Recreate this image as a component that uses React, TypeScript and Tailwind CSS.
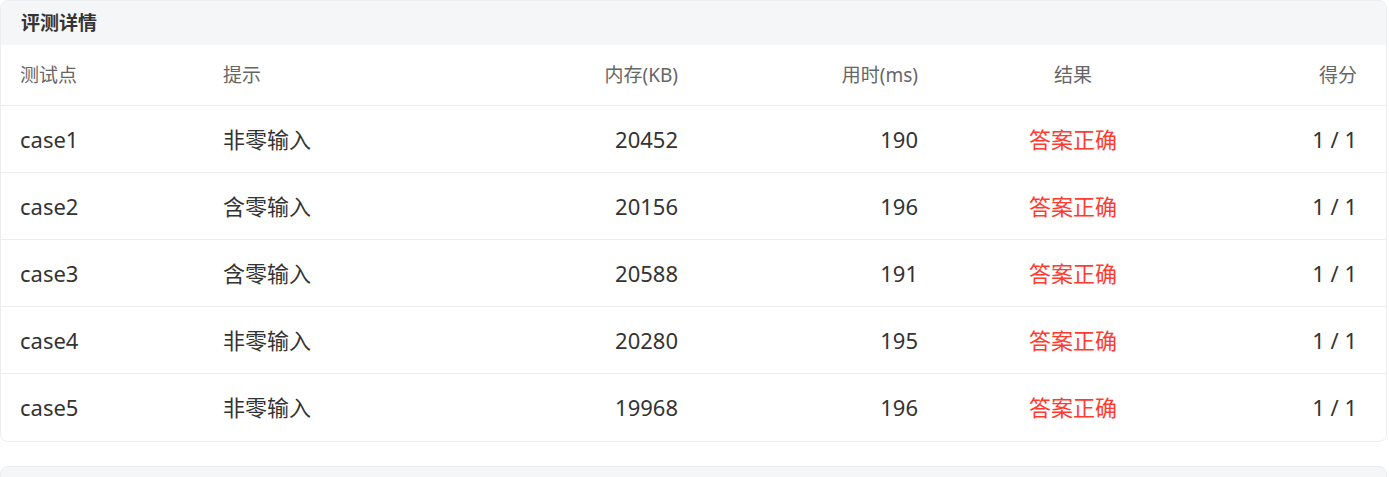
import React from "react";

const rows = [
  { c: "case1", h: "非零输入", m: "20452", t: "190" },
  { c: "case2", h: "含零输入", m: "20156", t: "196" },
  { c: "case3", h: "含零输入", m: "20588", t: "191" },
  { c: "case4", h: "非零输入", m: "20280", t: "195" },
  { c: "case5", h: "非零输入", m: "19968", t: "196" },
];

const grid = "grid grid-cols-[203px_235px_220px_240px_310px_129px] pl-[19px] pr-[28px] items-center";

export default function App() {
  return (
    <div className="w-[1389px] h-[477px] bg-white overflow-hidden" style={{ fontFamily: '"Noto Sans", "Noto Sans CJK SC", sans-serif' }}>
      <div className="w-[1387px] border border-[#ebedf0] rounded-[8px] overflow-hidden">
        <div className="h-[44px] bg-[#f5f6f8] flex items-center pl-[20px] text-[19px] font-bold text-[#333]">评测详情</div>
        <div className={`${grid} h-[61px] border-b border-[#ebedf0] text-[19px] text-[#666]`}>
          <div>测试点</div>
          <div>提示</div>
          <div className="text-right">内存(KB)</div>
          <div className="text-right">用时(ms)</div>
          <div className="text-center">结果</div>
          <div className="text-right">得分</div>
        </div>
        {rows.map((r, i) => (
          <div key={r.c} className={`${grid} h-[67px] text-[22px] text-[#333] ${i < rows.length - 1 ? "border-b border-[#ebedf0]" : ""}`}>
            <div>{r.c}</div>
            <div>{r.h}</div>
            <div className="text-right">{r.m}</div>
            <div className="text-right">{r.t}</div>
            <div className="text-center text-[#ff3b30]">答案正确</div>
            <div className="text-right">1 / 1</div>
          </div>
        ))}
      </div>
      <div className="mt-[24px] w-[1387px] h-[40px] border border-[#ebedf0] rounded-[8px] bg-[#f5f6f8]"></div>
    </div>
  );
}
